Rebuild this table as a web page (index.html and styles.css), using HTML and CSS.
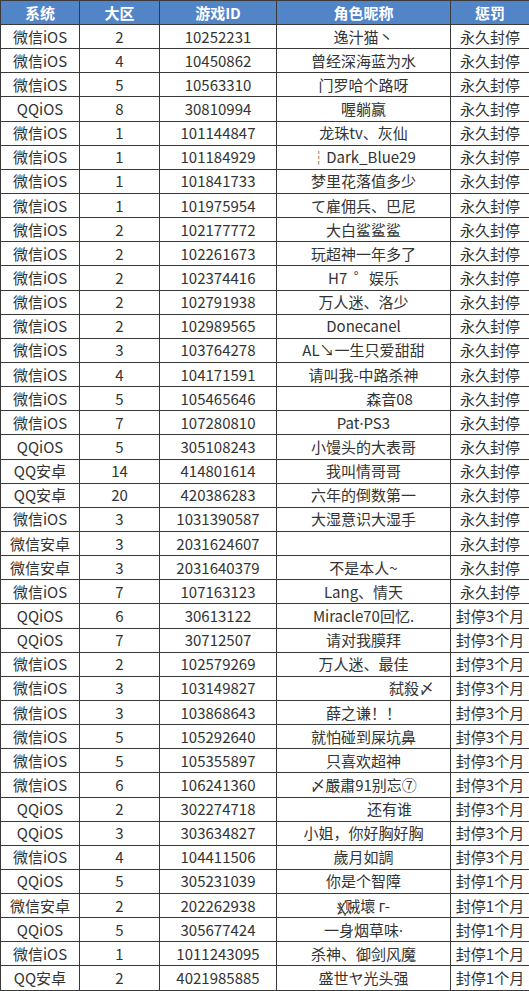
FILE: index.html
```html
<!DOCTYPE html>
<html lang="zh">
<head>
<meta charset="utf-8">
<link rel="stylesheet" href="styles.css">
</head>
<body>
<table class="ban">
<colgroup><col class="c1"><col class="c2"><col class="c3"><col class="c4"><col class="c5"></colgroup>
<thead>
<tr><th>系统</th><th>大区</th><th>游戏ID</th><th>角色昵称</th><th>惩罚</th></tr>
</thead>
<tbody>
<tr><td>微信iOS</td><td>2</td><td>10252231</td><td>逸汁猫丶</td><td>永久封停</td></tr>
<tr><td>微信iOS</td><td>4</td><td>10450862</td><td>曾经深海蓝为水</td><td>永久封停</td></tr>
<tr><td>微信iOS</td><td>5</td><td>10563310</td><td>门罗哈个路呀</td><td>永久封停</td></tr>
<tr><td>QQiOS</td><td>8</td><td>30810994</td><td>喔躺赢</td><td>永久封停</td></tr>
<tr><td>微信iOS</td><td>1</td><td>101144847</td><td>龙珠tv、灰仙</td><td>永久封停</td></tr>
<tr><td>微信iOS</td><td>1</td><td>101184929</td><td>┆Dark_Blue29</td><td>永久封停</td></tr>
<tr><td>微信iOS</td><td>1</td><td>101841733</td><td>梦里花落值多少</td><td>永久封停</td></tr>
<tr><td>微信iOS</td><td>1</td><td>101975954</td><td>て雇佣兵、巴尼</td><td>永久封停</td></tr>
<tr><td>微信iOS</td><td>2</td><td>102177772</td><td>大白鲨鲨鲨</td><td>永久封停</td></tr>
<tr><td>微信iOS</td><td>2</td><td>102261673</td><td>玩超神一年多了</td><td>永久封停</td></tr>
<tr><td>微信iOS</td><td>2</td><td>102374416</td><td>H7 &nbsp;゜娱乐</td><td>永久封停</td></tr>
<tr><td>微信iOS</td><td>2</td><td>102791938</td><td>万人迷、洛少</td><td>永久封停</td></tr>
<tr><td>微信iOS</td><td>2</td><td>102989565</td><td>Donecanel</td><td>永久封停</td></tr>
<tr><td>微信iOS</td><td>3</td><td>103764278</td><td>AL↘一生只爱甜甜</td><td>永久封停</td></tr>
<tr><td>微信iOS</td><td>4</td><td>104171591</td><td>请叫我-中路杀神</td><td>永久封停</td></tr>
<tr><td>微信iOS</td><td>5</td><td>105465646</td><td class="shift">森音08</td><td>永久封停</td></tr>
<tr><td>微信iOS</td><td>7</td><td>107280810</td><td>Pat<span class="latin">·</span>PS3</td><td>永久封停</td></tr>
<tr><td>QQiOS</td><td>5</td><td>305108243</td><td>小馒头的大表哥</td><td>永久封停</td></tr>
<tr><td>QQ安卓</td><td>14</td><td>414801614</td><td>我叫情哥哥</td><td>永久封停</td></tr>
<tr><td>QQ安卓</td><td>20</td><td>420386283</td><td>六年的倒数第一</td><td>永久封停</td></tr>
<tr><td>微信iOS</td><td>3</td><td>1031390587</td><td>大湿意识大湿手</td><td>永久封停</td></tr>
<tr><td>微信安卓</td><td>3</td><td>2031624607</td><td></td><td>永久封停</td></tr>
<tr><td>微信安卓</td><td>3</td><td>2031640379</td><td>不是本人~</td><td>永久封停</td></tr>
<tr><td>微信iOS</td><td>7</td><td>107163123</td><td>Lang、情天</td><td>永久封停</td></tr>
<tr><td>QQiOS</td><td>6</td><td>30613122</td><td>Miracle70回忆.</td><td>封停3个月</td></tr>
<tr><td>QQiOS</td><td>7</td><td>30712507</td><td>请对我膜拜</td><td>封停3个月</td></tr>
<tr><td>微信iOS</td><td>2</td><td>102579269</td><td>万人迷、最佳</td><td>封停3个月</td></tr>
<tr><td>微信iOS</td><td>3</td><td>103149827</td><td class="shift-far">弑殺〆</td><td>封停3个月</td></tr>
<tr><td>微信iOS</td><td>3</td><td>103868643</td><td>薛之谦！！</td><td>封停3个月</td></tr>
<tr><td>微信iOS</td><td>5</td><td>105292640</td><td>就怕碰到屎坑鼻</td><td>封停3个月</td></tr>
<tr><td>微信iOS</td><td>5</td><td>105355897</td><td>只喜欢超神</td><td>封停3个月</td></tr>
<tr><td>微信iOS</td><td>6</td><td>106241360</td><td>〆嚴肅91别忘⑦</td><td>封停3个月</td></tr>
<tr><td>QQiOS</td><td>2</td><td>302274718</td><td class="shift">还有谁</td><td>封停3个月</td></tr>
<tr><td>QQiOS</td><td>3</td><td>303634827</td><td>小姐，你好胸好胸</td><td>封停3个月</td></tr>
<tr><td>微信iOS</td><td>4</td><td>104411506</td><td>歲月如調</td><td>封停3个月</td></tr>
<tr><td>QQiOS</td><td>5</td><td>305231039</td><td>你是个智障</td><td>封停1个月</td></tr>
<tr><td>微信安卓</td><td>2</td><td>202262938</td><td>χ҉贼壞 г-</td><td>封停1个月</td></tr>
<tr><td>QQiOS</td><td>5</td><td>305677424</td><td>一身烟草味<span class="latin">·</span></td><td>封停1个月</td></tr>
<tr><td>微信iOS</td><td>1</td><td>1011243095</td><td>杀神、御剑风魔</td><td>封停1个月</td></tr>
<tr><td>QQ安卓</td><td>2</td><td>4021985885</td><td>盛世ヤ光头强</td><td>封停1个月</td></tr>
</tbody>
</table>
</body>
</html>
```

FILE: styles.css
```css
html, body {
  margin: 0;
  padding: 0;
  background: #ffffff;
}

.ban {
  width: 529px;
  height: 991px;
  border-collapse: collapse;
  table-layout: fixed;
  font-family: "Noto Sans CJK SC", "Noto Sans", sans-serif;
  font-size: 15px;
  color: #333333;
}

.c1 { width: 79px; }
.c2 { width: 80px; }
.c3 { width: 117px; }
.c4 { width: 174px; }
.c5 { width: 79px; }

.ban tr {
  height: 24px;
}

.ban th,
.ban td {
  border: 1px solid #3a3a3a;
  padding: 0;
  text-align: center;
  vertical-align: middle;
  white-space: nowrap;
  overflow: hidden;
  line-height: 18px;
}

.ban th {
  background: #5284c8;
  color: #ffffff;
  font-weight: 700;
  font-size: 15px;
}

.ban td.shift { padding-left: 52px; }
.ban td.shift-far { padding-left: 96px; }

.latin {
  font-family: "Noto Sans", sans-serif;
}
```
